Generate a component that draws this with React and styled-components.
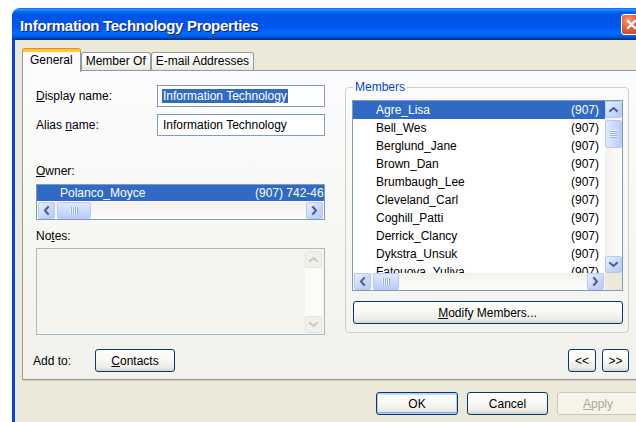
import React from "react";
import styled, { createGlobalStyle, css } from "styled-components";

const GlobalStyle = createGlobalStyle`
  html, body {
    margin: 0;
    padding: 0;
    background: #ffffff;
    overflow: hidden;
  }
  body {
    font-family: "Liberation Sans", Arial, sans-serif;
    font-size: 12px;
    color: #000;
  }
`;

const Desktop = styled.div`
  width: 636px;
  height: 422px;
  padding: 8px 0 0 12px;
  box-sizing: border-box;
  overflow: hidden;
`;

const Window = styled.div`
  width: 636px;
  height: 440px;
  display: flex;
  flex-direction: column;
  border-radius: 8px 8px 0 0;
  overflow: hidden;
`;

const TitleBar = styled.div`
  height: 32px;
  flex: none;
  display: flex;
  align-items: center;
  justify-content: space-between;
  padding: 0 6px 0 8px;
  background: linear-gradient(
    180deg,
    #0058ee 0%,
    #3593ff 4%,
    #288eff 6%,
    #127dff 8%,
    #036ffc 10%,
    #0262ee 14%,
    #0057e5 20%,
    #0054e3 24%,
    #0055eb 56%,
    #005bf5 66%,
    #026afe 76%,
    #0062ef 86%,
    #0052d6 92%,
    #0040ab 94%,
    #003092 100%
  );
`;

const Title = styled.span`
  padding-top: 3px;
  color: #fff;
  font-weight: bold;
  font-size: 15px;
  letter-spacing: -0.3px;
  text-shadow: 1px 1px 0 #0a1883;
  white-space: nowrap;
`;

const CloseButton = styled.div`
  width: 21px;
  height: 21px;
  box-sizing: border-box;
  border: 1px solid #fff;
  border-radius: 3px;
  display: flex;
  align-items: center;
  justify-content: center;
  background: radial-gradient(circle at 35% 30%, #f29b7c 0%, #e2603b 45%, #c43e1c 100%);
`;

const Frame = styled.div`
  flex: 1;
  display: flex;
  flex-direction: column;
  background: #ece9d8;
  border-left: 3px solid #0a46d8;
  padding: 9px 7px 0 7px;
`;

const TabStrip = styled.div`
  display: flex;
  align-items: flex-end;
  height: 21px;
  flex: none;
`;

const Tab = styled.div`
  position: relative;
  height: 18px;
  box-sizing: border-box;
  padding: 0 4px;
  line-height: 17px;
  white-space: nowrap;
  border: 1px solid #919b9c;
  border-bottom: none;
  border-radius: 3px 3px 0 0;
  background: linear-gradient(180deg, #ffffff 0%, #f6f6f2 60%, #e7e6de 100%);

  ${(p) =>
    p.$active &&
    css`
      z-index: 1;
      height: 23px;
      margin-bottom: -2px;
      padding: 0 7px;
      border-top: 3px solid #ffc83c;
      box-shadow: inset 0 -0px 0 #fff, 0 -1px 0 #e68b2c;
      background: #fcfcfe;
    `}
`;

const TabPage = styled.div`
  height: 310px;
  box-sizing: border-box;
  flex: none;
  display: flex;
  flex-direction: column;
  padding: 9px 11px 7px 10px;
  border: 1px solid #919b9c;
  box-shadow: 1px 1px 0 #d0cebf;
  background: linear-gradient(180deg, #fcfcfe 0%, #f7f7f4 50%, #f2f1ec 100%);
`;

const Columns = styled.div`
  display: grid;
  grid-template-columns: 292px 1fr;
  column-gap: 20px;
  align-items: start;
`;

const LeftColumn = styled.div`
  display: flex;
  flex-direction: column;
  padding: 5px 0 0 3px;
`;

const FieldRow = styled.div`
  display: flex;
  align-items: center;
  height: 22px;
  & + & {
    margin-top: 7px;
  }
`;

const Label = styled.label`
  display: block;
  line-height: 14px;
  white-space: nowrap;
  width: ${(p) => (p.$width ? `${p.$width}px` : "auto")};
  flex: none;
  margin-top: ${(p) => p.$top || 0}px;
`;

const TextBox = styled.div`
  flex: 1;
  height: 22px;
  box-sizing: border-box;
  display: flex;
  align-items: center;
  padding-left: 4px;
  border: 1px solid #7f9db9;
  background: #fff;
  overflow: hidden;
`;

const Value = styled.span`
  padding: 0 1px;
  line-height: 14px;
  white-space: nowrap;
  ${(p) =>
    p.$selected &&
    css`
      background: #316ac5;
      color: #fff;
    `}
`;

const ListBox = styled.div`
  box-sizing: border-box;
  height: ${(p) => p.$height}px;
  margin-top: ${(p) => p.$top || 0}px;
  border: 1px solid #7f9db9;
  background: #fff;
  display: grid;
  grid-template-columns: ${(p) => (p.$vscroll ? "1fr 17px" : "1fr")};
  grid-template-rows: 1fr 17px;
  overflow: hidden;
`;

const Viewport = styled.div`
  overflow: hidden;
  min-width: 0;
  min-height: 0;
`;

const Row = styled.div`
  display: grid;
  grid-template-columns: 218px 1fr;
  align-items: center;
  height: ${(p) => p.$height || 18}px;
  white-space: nowrap;
  overflow: hidden;
  ${(p) =>
    p.$selected &&
    css`
      background: #316ac5;
      color: #fff;
    `}
`;

const NameCell = styled.span`
  padding-left: 23px;
  overflow: hidden;
`;

const PhoneCell = styled.span`
  overflow: hidden;
`;

const HScroll = styled.div`
  display: flex;
  align-items: center;
  padding: 0 1px;
  background: linear-gradient(180deg, #f3f1ec 0%, #fefefb 100%);
  min-width: 0;
`;

const VScroll = styled.div`
  display: flex;
  flex-direction: column;
  align-items: center;
  background: linear-gradient(90deg, #f3f1ec 0%, #fefefb 100%);
  ${(p) =>
    p.$disabled &&
    css`
      width: 17px;
      margin: 2px 2px 1px 0;
      background: #fbfbf8;
    `}
`;

const Corner = styled.div`
  background: #ece9d8;
`;

const ArrowButton = styled.div`
  width: 17px;
  height: 17px;
  flex: none;
  box-sizing: border-box;
  display: flex;
  align-items: center;
  justify-content: center;
  border-radius: 2px;
  border: 1px solid ${(p) => (p.$disabled ? "#e6e4da" : "#b7caf5")};
  background: ${(p) =>
    p.$disabled
      ? "#f1f0ea"
      : "linear-gradient(135deg, #eaf0fe 0%, #cbd9fc 50%, #b6c9f6 100%)"};
  margin-left: ${(p) => (p.$end ? "auto" : "0")};
  margin-top: ${(p) => (p.$bottom ? "auto" : "0")};
`;

const Thumb = styled.div`
  flex: none;
  box-sizing: border-box;
  display: flex;
  align-items: center;
  justify-content: center;
  border: 1px solid #b7caf5;
  border-radius: 2px;
  ${(p) =>
    p.$vertical
      ? css`
          width: 17px;
          height: ${p.$size}px;
          margin-top: 2px;
          background: linear-gradient(90deg, #dfe8fd 0%, #c9d8fc 60%, #b9ccf7 100%);
        `
      : css`
          height: 17px;
          width: ${p.$size}px;
          margin-left: 2px;
          background: linear-gradient(180deg, #dfe8fd 0%, #c9d8fc 60%, #b9ccf7 100%);
        `}
`;

const Grip = styled.div`
  ${(p) =>
    p.$vertical
      ? css`
          width: 7px;
          height: 8px;
          background: repeating-linear-gradient(180deg, #f0f5ff 0 1px, #8cb0f8 1px 2px);
        `
      : css`
          width: 8px;
          height: 7px;
          background: repeating-linear-gradient(90deg, #f0f5ff 0 1px, #8cb0f8 1px 2px);
        `}
`;

const NotesBox = styled.div`
  display: flex;
  height: 87px;
  box-sizing: border-box;
  margin-top: 5px;
  border: 1px solid #a5b9ce;
  background: #f5f4ef;
`;

const NotesArea = styled.div`
  flex: 1;
`;

const AddRow = styled.div`
  margin-top: auto;
  display: flex;
  align-items: center;
  height: 23px;
`;

const Group = styled.fieldset`
  margin: 0;
  padding: 6px 5px 8px 6px;
  border: 1px solid #d0d0bf;
  border-radius: 4px;
  min-width: 0;
  display: flex;
  flex-direction: column;
`;

const Legend = styled.legend`
  padding: 0 2px;
  margin-left: 1px;
  line-height: 14px;
  color: #0046d5;
`;

const Button = styled.button`
  width: ${(p) => p.$width}px;
  height: 23px;
  flex: none;
  padding: 0;
  font-family: "Liberation Sans", Arial, sans-serif;
  font-size: 12px;
  color: #000;
  border: 1px solid #003c74;
  border-radius: 3px;
  background: linear-gradient(180deg, #ffffff 0%, #f8f8f5 45%, #ecebe6 85%, #d6d0c5 100%);
  margin-left: ${(p) => p.$left || 0}px;

  ${(p) =>
    p.$default &&
    css`
      box-shadow: inset 0 0 0 1px #b4cbf8, inset 0 -2px 0 #8eaaf0, inset 0 2px 0 #cee0ff;
    `}

  ${(p) =>
    p.disabled &&
    css`
      color: #aca899;
      border-color: #c9c7ba;
      background: #f5f4ea;
    `}
`;

const NavGroup = styled.div`
  margin-left: auto;
  display: flex;
  gap: 6px;
`;

const DialogButtons = styled.div`
  margin-top: 12px;
  display: flex;
  justify-content: flex-end;
  gap: 9px;
  padding-right: 2px;
`;

const arrowPaths = {
  left: "6,1 3,4.5 6,8",
  right: "3,1 6,4.5 3,8",
  up: "1,6 4.5,3 8,6",
  down: "1,3 4.5,6 8,3",
};

const Arrow = ({ dir, disabled, ...rest }) => (
  <ArrowButton $disabled={disabled} {...rest}>
    <svg width="9" height="9" viewBox="0 0 9 9">
      <polyline
        points={arrowPaths[dir]}
        fill="none"
        stroke={disabled ? "#c9c7ba" : "#4d6185"}
        strokeWidth="2"
        strokeLinecap="square"
      />
    </svg>
  </ArrowButton>
);

const HorizontalBar = ({ thumb }) => (
  <HScroll>
    <Arrow dir="left" />
    <Thumb $size={thumb}>
      <Grip />
    </Thumb>
    <Arrow dir="right" $end />
  </HScroll>
);

const members = [
  "Agre_Lisa",
  "Bell_Wes",
  "Berglund_Jane",
  "Brown_Dan",
  "Brumbaugh_Lee",
  "Cleveland_Carl",
  "Coghill_Patti",
  "Derrick_Clancy",
  "Dykstra_Unsuk",
  "Fatouova_Yuliya",
];

export default function App() {
  return (
    <>
      <GlobalStyle />
      <Desktop>
        <Window>
          <TitleBar>
            <Title>Information Technology Properties</Title>
            <CloseButton>
              <svg width="11" height="11" viewBox="0 0 11 11">
                <path d="M2 2 L9 9 M9 2 L2 9" stroke="#fff" strokeWidth="2.2" strokeLinecap="square" />
              </svg>
            </CloseButton>
          </TitleBar>

          <Frame>
            <TabStrip>
              <Tab $active>General</Tab>
              <Tab>Member Of</Tab>
              <Tab>E-mail Addresses</Tab>
            </TabStrip>

            <TabPage>
              <Columns>
                <LeftColumn>
                  <FieldRow>
                    <Label $width={121}>
                      <u>D</u>isplay name:
                    </Label>
                    <TextBox>
                      <Value $selected>Information Technology</Value>
                    </TextBox>
                  </FieldRow>
                  <FieldRow>
                    <Label $width={121}>
                      Alias <u>n</u>ame:
                    </Label>
                    <TextBox>
                      <Value>Information Technology</Value>
                    </TextBox>
                  </FieldRow>

                  <Label $top={28}>
                    <u>O</u>wner:
                  </Label>
                  <ListBox $height={36} $top={6}>
                    <Viewport>
                      <Row $selected $height={16}>
                        <NameCell>Polanco_Moyce</NameCell>
                        <PhoneCell>(907) 742-46</PhoneCell>
                      </Row>
                    </Viewport>
                    <HorizontalBar thumb={34} />
                  </ListBox>

                  <Label $top={9}>
                    No<u>t</u>es:
                  </Label>
                  <NotesBox>
                    <NotesArea />
                    <VScroll $disabled>
                      <Arrow dir="up" disabled />
                      <Arrow dir="down" disabled $bottom />
                    </VScroll>
                  </NotesBox>
                </LeftColumn>

                <Group>
                  <Legend>Members</Legend>
                  <ListBox $height={191} $vscroll>
                    <Viewport>
                      {members.map((name, i) => (
                        <Row key={name} $selected={i === 0}>
                          <NameCell>{name}</NameCell>
                          <PhoneCell>(907)</PhoneCell>
                        </Row>
                      ))}
                    </Viewport>
                    <VScroll>
                      <Arrow dir="up" />
                      <Thumb $vertical $size={28}>
                        <Grip $vertical />
                      </Thumb>
                      <Arrow dir="down" $bottom />
                    </VScroll>
                    <HorizontalBar thumb={26} />
                    <Corner />
                  </ListBox>
                  <Button $width={270} style={{ marginTop: 10, alignSelf: "center" }}>
                    <u>M</u>odify Members...
                  </Button>
                </Group>
              </Columns>

              <AddRow>
                <Label $width={62}>Add to:</Label>
                <Button $width={80}>
                  <u>C</u>ontacts
                </Button>
                <NavGroup>
                  <Button $width={28}>&lt;&lt;</Button>
                  <Button $width={27}>&gt;&gt;</Button>
                </NavGroup>
              </AddRow>
            </TabPage>

            <DialogButtons>
              <Button $width={82} $default>
                OK
              </Button>
              <Button $width={81}>Cancel</Button>
              <Button $width={82} disabled>
                <u>A</u>pply
              </Button>
            </DialogButtons>
          </Frame>
        </Window>
      </Desktop>
    </>
  );
}
